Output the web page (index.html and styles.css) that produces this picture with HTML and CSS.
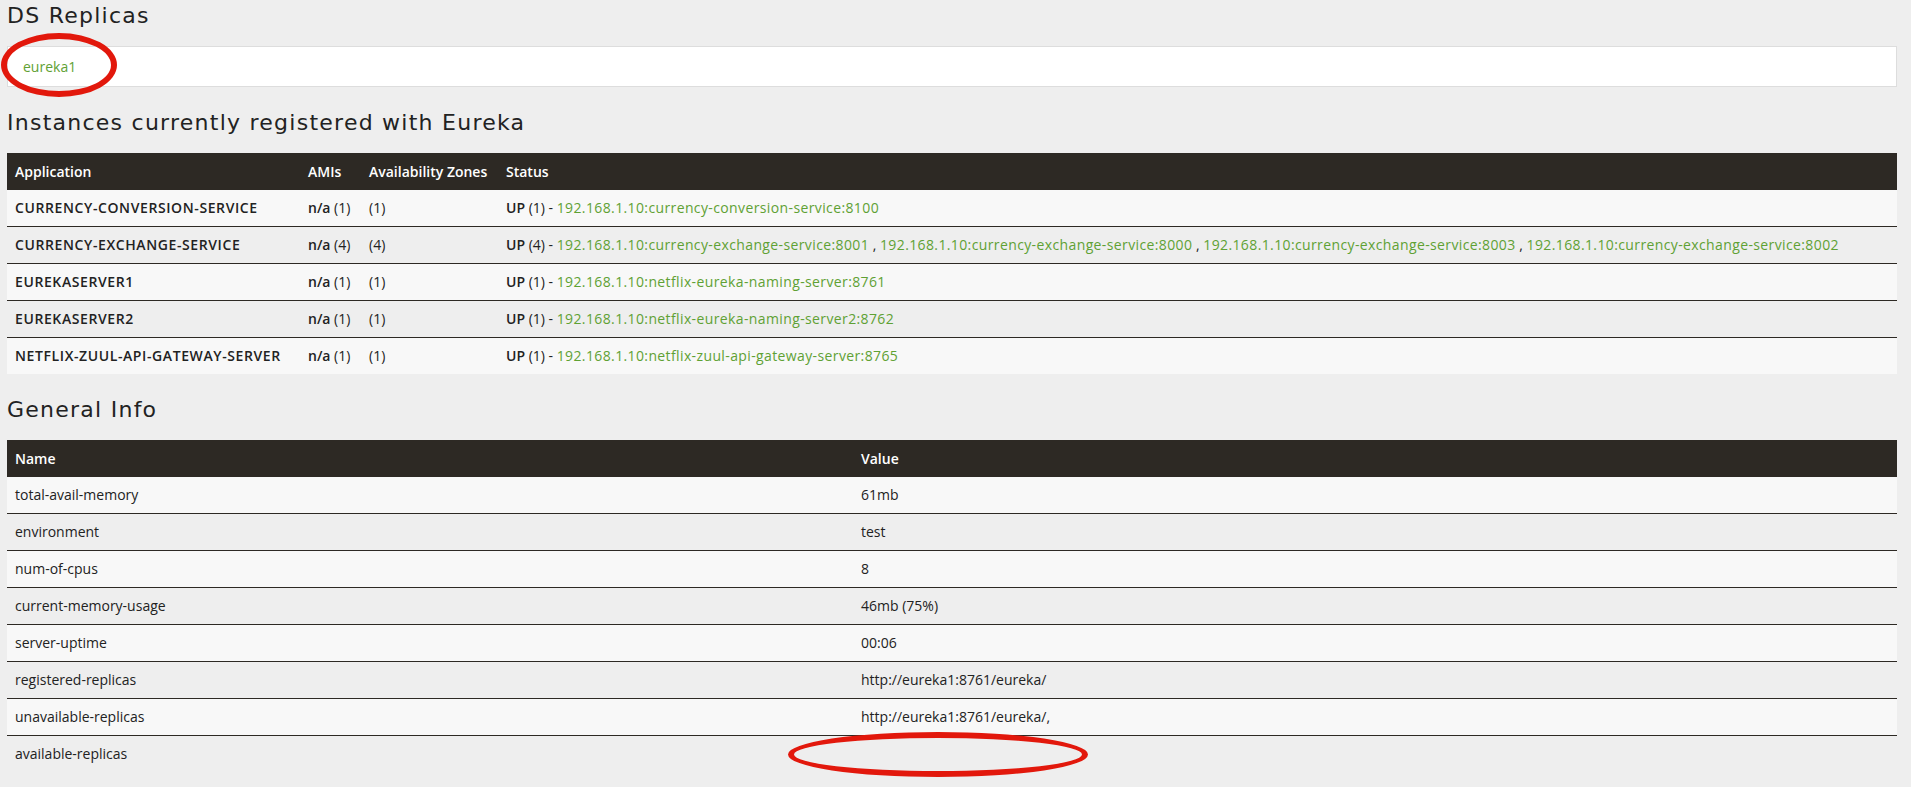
FILE: index.html
```html
<!DOCTYPE html>
<html lang="en">

<head>
    <meta charset="UTF-8">
    <meta name="viewport" content="width=device-width, initial-scale=1.0">
    <title>Eureka</title>
    <link rel="stylesheet" href="styles.css">
</head>

<body>
    <div class="page">
        <h2 class="first">DS Replicas</h2>
        <ul class="replicas">
            <li><a href="#">eureka1</a></li>
        </ul>

        <h2>Instances currently registered with Eureka</h2>
        <table class="stripe" id="instances">
            <thead>
                <tr>
                    <th class="col-app">Application</th>
                    <th class="col-ami">AMIs</th>
                    <th class="col-zone">Availability Zones</th>
                    <th>Status</th>
                </tr>
            </thead>
            <tbody>
                <tr>
                    <td class="app">CURRENCY-CONVERSION-SERVICE</td>
                    <td><b>n/a</b> (1)</td>
                    <td>(1)</td>
                    <td class="status"><b>UP</b> (1) - <a href="#">192.168.1.10:currency-conversion-service:8100</a></td>
                </tr>
                <tr>
                    <td class="app">CURRENCY-EXCHANGE-SERVICE</td>
                    <td><b>n/a</b> (4)</td>
                    <td>(4)</td>
                    <td class="status"><b>UP</b> (4) - <a href="#">192.168.1.10:currency-exchange-service:8001</a> , <a href="#">192.168.1.10:currency-exchange-service:8000</a> , <a href="#">192.168.1.10:currency-exchange-service:8003</a> , <a href="#">192.168.1.10:currency-exchange-service:8002</a></td>
                </tr>
                <tr>
                    <td class="app">EUREKASERVER1</td>
                    <td><b>n/a</b> (1)</td>
                    <td>(1)</td>
                    <td class="status"><b>UP</b> (1) - <a href="#">192.168.1.10:netflix-eureka-naming-server:8761</a></td>
                </tr>
                <tr>
                    <td class="app">EUREKASERVER2</td>
                    <td><b>n/a</b> (1)</td>
                    <td>(1)</td>
                    <td class="status"><b>UP</b> (1) - <a href="#">192.168.1.10:netflix-eureka-naming-server2:8762</a></td>
                </tr>
                <tr>
                    <td class="app">NETFLIX-ZUUL-API-GATEWAY-SERVER</td>
                    <td><b>n/a</b> (1)</td>
                    <td>(1)</td>
                    <td class="status"><b>UP</b> (1) - <a href="#">192.168.1.10:netflix-zuul-api-gateway-server:8765</a></td>
                </tr>
            </tbody>
        </table>

        <h2>General Info</h2>
        <table class="stripe" id="info">
            <thead>
                <tr>
                    <th class="col-name">Name</th>
                    <th>Value</th>
                </tr>
            </thead>
            <tbody>
                <tr><td>total-avail-memory</td><td>61mb</td></tr>
                <tr><td>environment</td><td>test</td></tr>
                <tr><td>num-of-cpus</td><td>8</td></tr>
                <tr><td>current-memory-usage</td><td>46mb (75%)</td></tr>
                <tr><td>server-uptime</td><td>00:06</td></tr>
                <tr><td>registered-replicas</td><td>http://eureka1:8761/eureka/</td></tr>
                <tr><td>unavailable-replicas</td><td>http://eureka1:8761/eureka/,</td></tr>
                <tr><td>available-replicas</td><td></td></tr>
            </tbody>
        </table>
    </div>

    <!-- red marks drawn over the screenshot -->
    <div class="mark mark-replica"></div>
    <div class="mark mark-available"></div>
</body>

</html>
```

FILE: styles.css
```css
/* General */
body {
    margin: 0;
    background-color: #eeeeee;
    font-family: "Open Sans", "Liberation Sans", sans-serif;
    font-size: 14px;
    color: #222222;
}

.page {
    margin: 0 14px 0 7px;
}

h2 {
    font-family: "DejaVu Sans", sans-serif;
    font-weight: normal;
    font-size: 22px;
    line-height: 26px;
    letter-spacing: 1.25px;
    color: #222222;
    margin: 23px 0 17px;
}

h2.first {
    margin-top: 3px;
}

a {
    color: #5fa134;
    text-decoration: none;
}

/* Replicas box */
.replicas {
    list-style: none;
    margin: 0;
    padding: 10px 15px;
    line-height: 19px;
    background-color: #ffffff;
    border: 1px solid #dddddd;
}

/* Tables */
table {
    width: 100%;
    border-collapse: collapse;
}

th,
td {
    box-sizing: border-box;
    text-align: left;
    padding: 8px;
}

th {
    background-color: #2d2924;
    color: #ffffff;
    font-weight: 600;
    line-height: 21px;
}

td {
    line-height: 20px;
    border-top: 1px solid #2d2924;
}

tbody tr:first-child td {
    border-top: none;
}

tbody tr:nth-child(odd) {
    background-color: #f8f8f8;
}

b {
    font-weight: 600;
}

td.app {
    font-weight: 600;
    letter-spacing: 0.6px;
}

td.status a {
    letter-spacing: 0.38px;
}

.col-app {
    width: 293px;
}

.col-ami {
    width: 61px;
}

.col-zone {
    width: 137px;
}

.col-name {
    width: 846px;
}

/* Red annotation marks */
.mark {
    position: absolute;
    box-sizing: border-box;
    border: 6px solid #e2180c;
    border-radius: 50%;
}

.mark-replica {
    left: 1px;
    top: 33px;
    width: 116px;
    height: 64px;
}

.mark-available {
    left: 788px;
    top: 732px;
    width: 300px;
    height: 45px;
}
```
